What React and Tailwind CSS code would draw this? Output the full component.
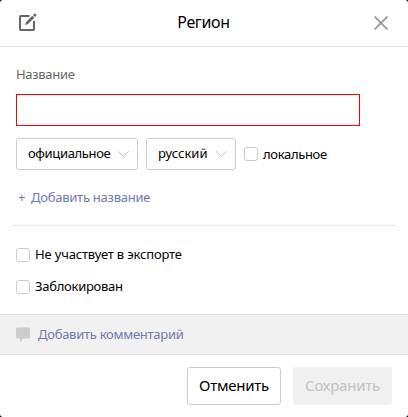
function Chevron() {
  return (
    <svg width="12" height="8" viewBox="0 0 12 8" fill="none" stroke="#c4c4c4" strokeWidth="1">
      <path d="M1.200 1.300 6.500 6.300 11.700 1.300" />
    </svg>
  );
}

function Select({ label, className }) {
  return (
    <button className={`flex h-8 items-center justify-between rounded-[3px] border border-[#cccccc] pl-[11px] pr-2 ${className}`}>
      <span className="whitespace-nowrap pb-0.5">{label}</span>
      <Chevron />
    </button>
  );
}

function Checkbox({ label, className }) {
  return (
    <label className={`flex h-4 items-center gap-[5px] ${className}`}>
      <span className="size-3.5 shrink-0 rounded-[3px] border border-[#cccccc] bg-white" />
      {label}
    </label>
  );
}

export default function App() {
  return (
    <div className="h-[417px] w-[408px] bg-black">
      <div className="flex h-full flex-col overflow-hidden rounded-[3px] bg-white font-['Noto_Sans','Open_Sans',sans-serif] text-[13px] leading-4 text-black">
        <header className="flex h-[47px] shrink-0 items-center justify-between border-b border-[#e4e4e4] pl-[18px] pr-5">
          <svg width="20" height="20" viewBox="0 0 20 20" fill="none">
            <path d="M11.500 3H2.700Q2 3 2 3.700V16.300Q2 17 2.700 17H15.300Q16 17 16 16.300V8" stroke="#666666" strokeWidth="2" />
            <path d="M7 12 8.100 8.900 14.300 2.700 16.300 4.700 10.100 10.900Z" fill="#666666" />
            <path d="M15 2.100 16.300.8Q17 .2 17.800 1T18.200 2.700L16.900 4Z" fill="#666666" />
          </svg>
          <h1 className="pb-0.5 pr-[5px] text-[16px] leading-5 tracking-[-0.350px]">Регион</h1>
          <svg width="14" height="14" viewBox="0 0 14 14" fill="none" stroke="#999999" strokeWidth="1.800">
            <path d="M.5.5 13.500 13.500M13.500.5.5 13.500" />
          </svg>
        </header>
        <main className="flex h-[267px] shrink-0 flex-col">
          <div className="px-4 pt-[19px]">
            <div className="tracking-[-0.300px] text-[#666666]">Название</div>
            <div className="mt-3 h-8 w-[344px] border border-[#ff0000]" />
            <div className="mt-3 flex items-center">
              <Select label="официальное" className="w-[122px] tracking-[-0.350px]" />
              <Select label="русский" className="ml-2 w-[90px]" />
              <Checkbox label={<span className="tracking-[-0.330px]">локальное</span>} className="ml-2" />
            </div>
            <div className="mt-[19px] flex gap-[5px] pl-0.5 tracking-[-0.250px] text-[#7078b0]">
              <span className="w-2">+</span>
              <span>Добавить название</span>
            </div>
          </div>
          <div className="mx-3 mt-5 h-px shrink-0 bg-[#e5e5e5]" />
          <div className="flex flex-col gap-4 px-4 pt-[21px]">
            <Checkbox label={<span className="pb-0.5 tracking-[-0.170px]">Не участвует в экспорте</span>} />
            <Checkbox label={<span className="pb-0.5 tracking-[-0.270px]">Заблокирован</span>} />
          </div>
        </main>
        <div className="flex h-[41px] shrink-0 items-center gap-2 border-y border-[#e2e2e2] bg-[#f1f1f1] px-4 text-[#7078b0]">
          <svg width="14" height="16" viewBox="0 0 14 16" fill="#cccccc">
            <path d="M1.500.5h11Q14 .5 14 2v8q0 1.500-1.500 1.500H7.500L4 15V11.500H1.500Q0 11.500 0 10V2Q0 .5 1.500.5Z" />
          </svg>
          <span className="pb-0.5 tracking-[-0.270px]">Добавить комментарий</span>
        </div>
        <footer className="flex flex-1 justify-end gap-3 px-4 pt-3 text-[15px] tracking-[-0.250px]">
          <button className="h-[38px] w-[94px] rounded-[3px] border border-[#cccccc] pb-0.5">Отменить</button>
          <button className="h-[38px] w-[99px] rounded-[3px] bg-[#f0f0f0] pb-0.5 text-[#c2c2c2]">Сохранить</button>
        </footer>
      </div>
    </div>
  );
}
